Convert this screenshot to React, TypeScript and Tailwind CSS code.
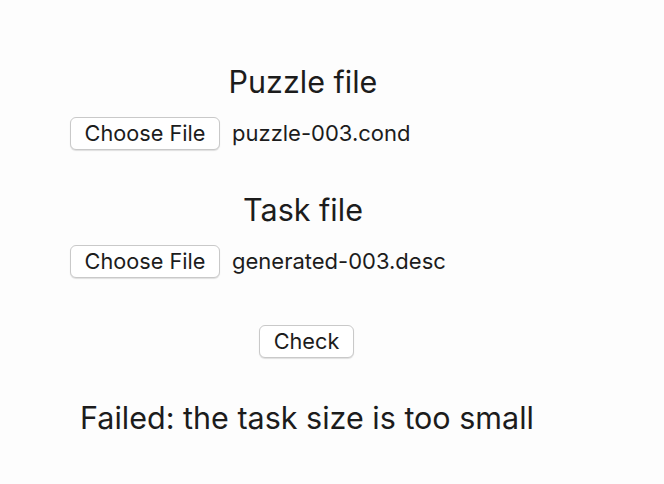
import React from "react";

function FileRow({ name }: { name: string }) {
  return (
    <div className="flex items-center gap-[12px]">
      <button className="h-[33px] w-[150px] rounded-[6px] border border-[#c9c9c9] bg-white text-[21.7px] leading-none text-[#1c1c1c] shadow-[0_1px_1px_rgba(0,0,0,0.12)]">
        Choose File
      </button>
      <span className="text-[22px] text-[#1c1c1c]">{name}</span>
    </div>
  );
}

export default function App() {
  return (
    <div
      className="min-h-[484px] w-[664px] bg-[#fdfdfd] pt-[62px]"
      style={{ fontFamily: "Inter, 'Noto Sans', sans-serif" }}
    >
      <div className="ml-[70px] flex w-[466px] flex-col">
        <h2 className="text-center text-[30.5px] leading-[40px] text-[#1c1c1c]">Puzzle file</h2>
        <div className="mt-[15px]">
          <FileRow name="puzzle-003.cond" />
        </div>
        <h2 className="mt-[40px] text-center text-[30.5px] leading-[40px] text-[#1c1c1c]">Task file</h2>
        <div className="mt-[15px]">
          <FileRow name="generated-003.desc" />
        </div>
        <div className="mt-[47px] flex justify-center pl-[7px]">
          <button className="h-[33px] w-[95px] rounded-[6px] border border-[#c9c9c9] bg-white text-[21.7px] leading-none text-[#1c1c1c] shadow-[0_1px_1px_rgba(0,0,0,0.12)]">
            Check
          </button>
        </div>
        <p className="mt-[40px] pl-[8px] text-center text-[30.5px] leading-[40px] text-[#1c1c1c]">
          Failed: the task size is too small
        </p>
      </div>
    </div>
  );
}
